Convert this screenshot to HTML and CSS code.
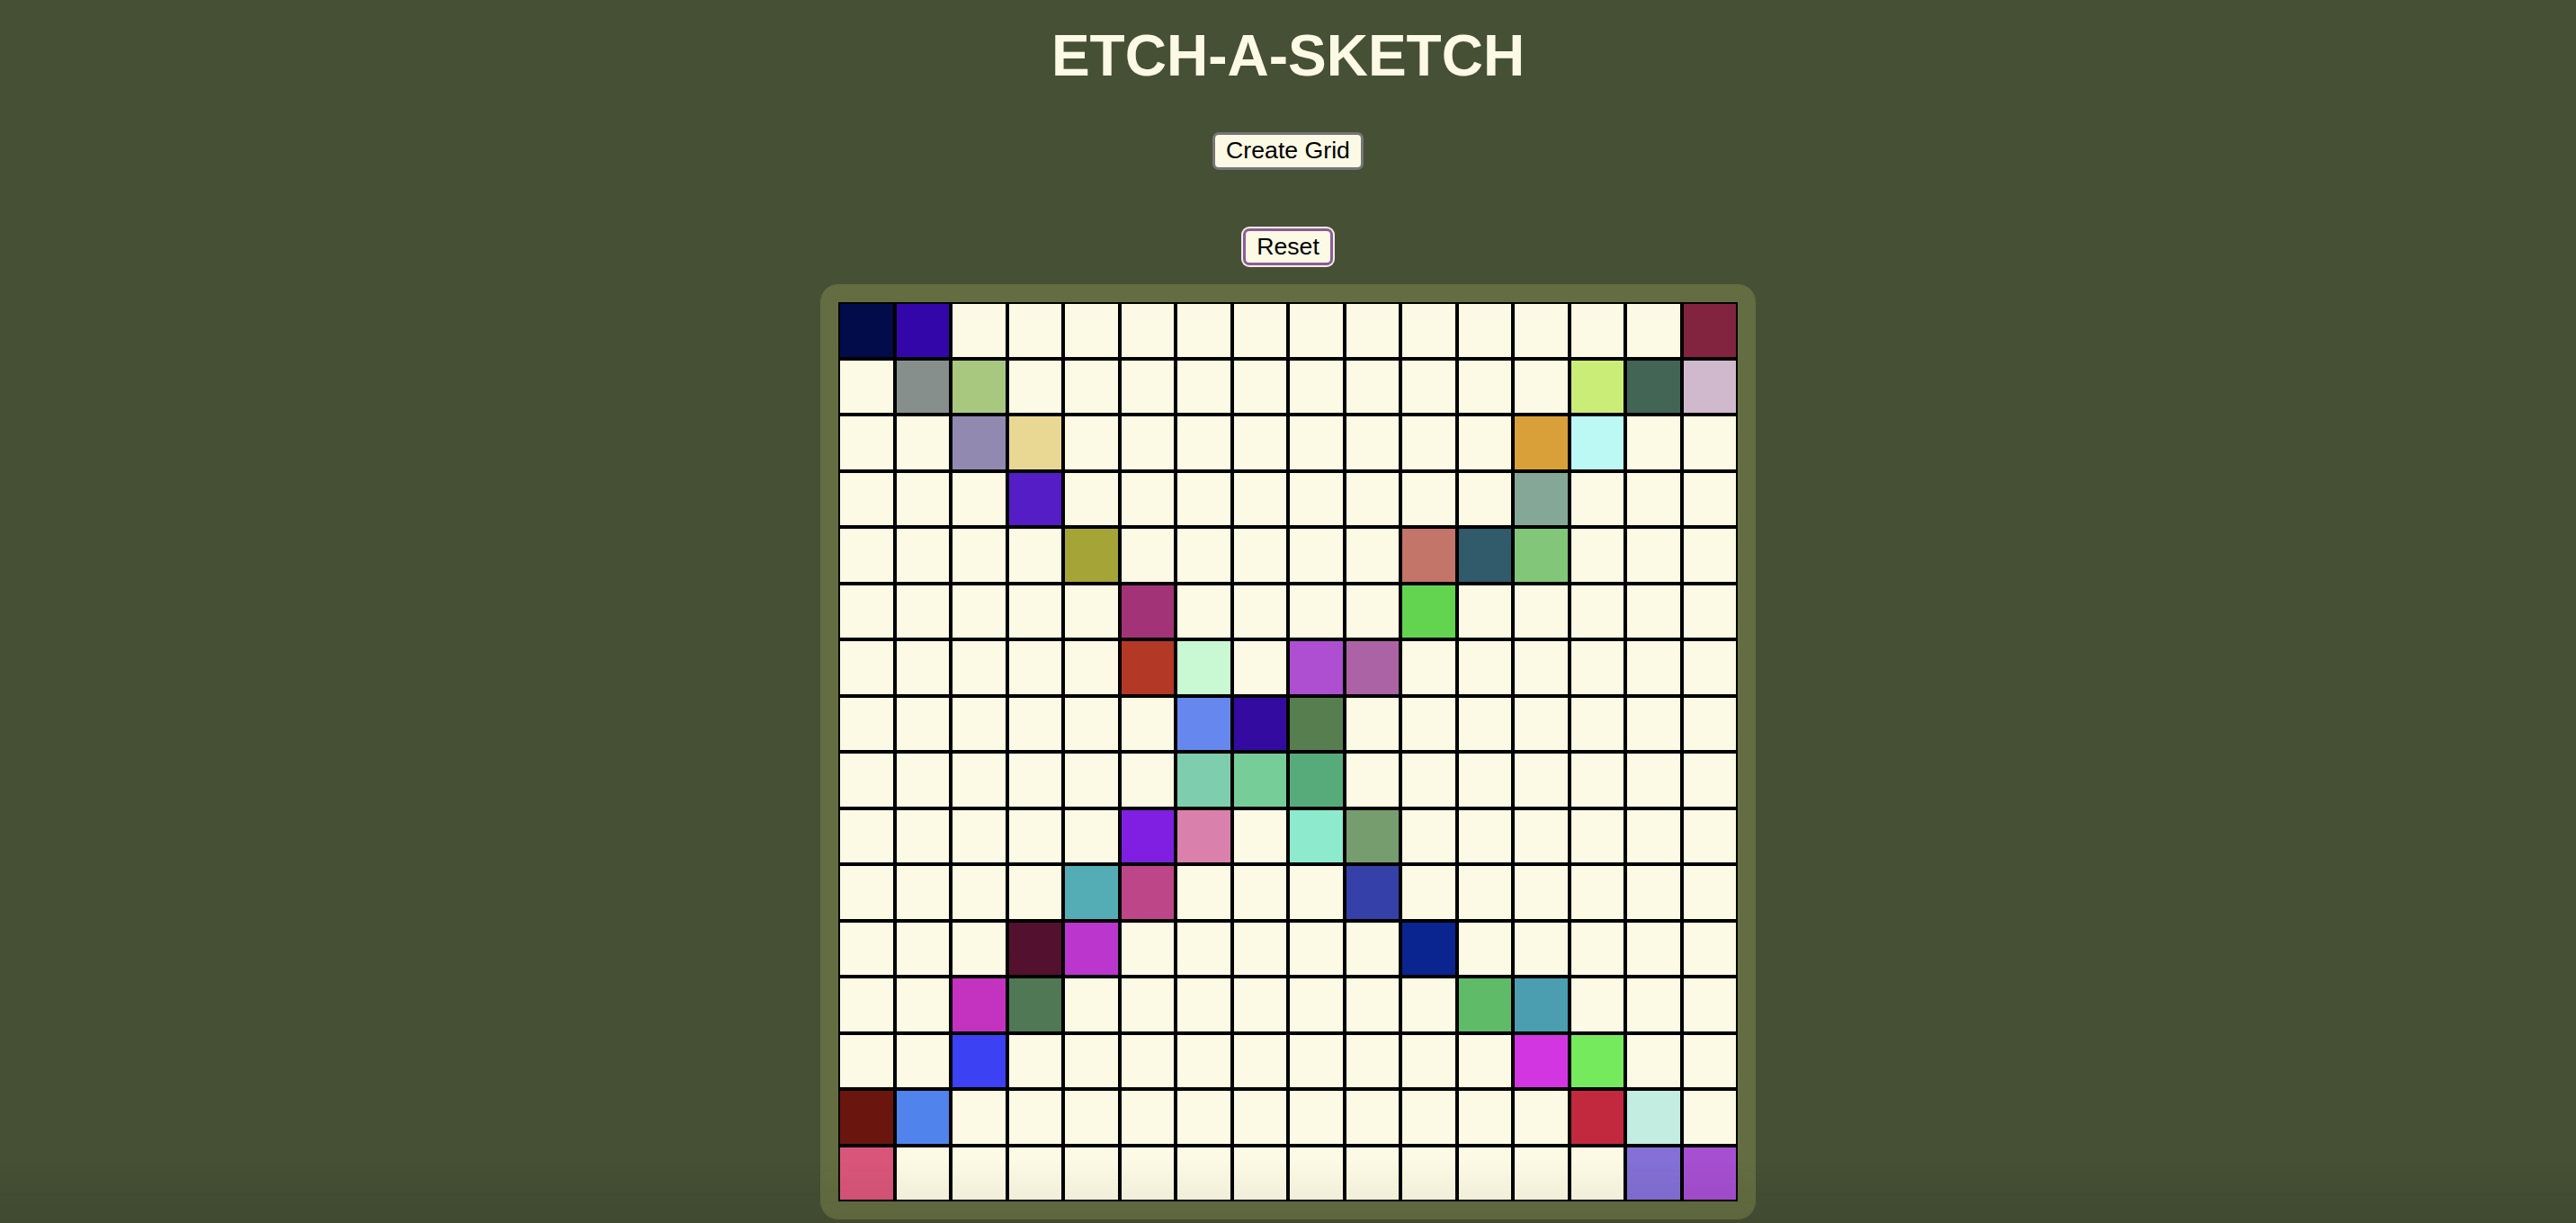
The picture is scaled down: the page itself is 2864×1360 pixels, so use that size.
FILE: index.html
```html
<!DOCTYPE html>
<html lang="en">
<head>
<meta charset="utf-8">
<title>Etch-a-Sketch</title>
<link rel="stylesheet" href="styles.css">
</head>
<body>
<main class="app">
  <h1 class="title">ETCH-A-SKETCH</h1>
  <div class="controls">
    <button class="btn btn-create" type="button">Create Grid</button>
    <button class="btn btn-reset" type="button">Reset</button>
  </div>
  <div class="board">
    <div class="grid" id="grid"></div>
  </div>
</main>
<div class="vignette"></div>
<script src="script.js"></script>
</body>
</html>
```

FILE: script.js
```js
(function () {
  var painted = {
    "0,0": "#020c4a", "0,1": "#3306a9", "0,15": "#82243f",
    "1,1": "#878f8c", "1,2": "#a8c880", "1,13": "#c9ed76", "1,14": "#426555", "1,15": "#d0b9cd",
    "2,2": "#9289b0", "2,3": "#e8d894", "2,12": "#d9a039", "2,13": "#bcf9f4",
    "3,3": "#541dc6", "3,12": "#85a798",
    "4,4": "#a4a437", "4,10": "#c27568", "4,11": "#315a6a", "4,12": "#81c679",
    "5,5": "#a23377", "5,10": "#63d450",
    "6,5": "#b43826", "6,6": "#c8f9d2", "6,8": "#ad4fd0", "6,9": "#ac63a6",
    "7,6": "#6688ee", "7,7": "#340ba0", "7,8": "#577e4f",
    "8,6": "#7ecdae", "8,7": "#76cd98", "8,8": "#57ab7b",
    "9,5": "#801fe2", "9,6": "#da80ad", "9,8": "#8deacd", "9,9": "#769d6e",
    "10,4": "#54adb5", "10,5": "#bd4688", "10,9": "#3540a8",
    "11,3": "#53112f", "11,4": "#ba36cd", "11,10": "#0a2490",
    "12,2": "#c433c0", "12,3": "#507854", "12,11": "#5fbb67", "12,12": "#4a9eb0",
    "13,2": "#3c41f4", "13,12": "#d136e0", "13,13": "#74ea5c",
    "14,0": "#6a160e", "14,1": "#5083ec", "14,13": "#c2283e", "14,14": "#c2ede0",
    "15,0": "#d9567a", "15,14": "#8470d6", "15,15": "#a64fd1"
  };
  var grid = document.getElementById("grid");
  for (var r = 0; r < 16; r++) {
    for (var c = 0; c < 16; c++) {
      var cell = document.createElement("div");
      cell.className = "cell";
      var key = r + "," + c;
      if (painted[key]) cell.style.backgroundColor = painted[key];
      grid.appendChild(cell);
    }
  }
})();
```

FILE: styles.css
```css
html, body {
  margin: 0;
  padding: 0;
}

body {
  background: #465035;
  min-height: 1360px;
  font-family: "Liberation Sans", Arial, Helvetica, sans-serif;
  overflow: hidden;
}

.app {
  display: flex;
  flex-direction: column;
  align-items: center;
  padding-top: 25px;
}

.title {
  margin: 0;
  font-size: 64px;
  line-height: 74px;
  font-weight: 700;
  color: #fcf9e4;
}

.controls {
  display: flex;
  flex-direction: column;
  align-items: center;
  gap: 65px;
  margin-top: 48px;
}

.btn {
  font-family: "Liberation Sans", Arial, Helvetica, sans-serif;
  font-size: 26.67px;
  line-height: 31.5px;
  color: #000;
  background: #fcf9e4;
  padding: 2px 12px;
  border: 3px solid #767676;
  border-radius: 7px;
  margin: 0;
}

.btn-reset {
  border-color: #8c5c97;
  box-shadow: 0 0 0 2px #f3eee4;
}

.board {
  margin-top: 21px;
  padding: 20px;
  background: #646d41;
  border-radius: 20px;
}

.grid {
  width: 1000px;
  height: 1000px;
  display: grid;
  grid-template-columns: repeat(16, 1fr);
  grid-template-rows: repeat(16, 1fr);
}

.cell {
  box-sizing: border-box;
  border: 2px solid #000;
  background: #fcf9e4;
}

.vignette {
  position: fixed;
  left: 0;
  right: 0;
  bottom: 0;
  height: 70px;
  pointer-events: none;
  background: linear-gradient(to bottom, rgba(0, 0, 0, 0), rgba(0, 0, 0, 0.07));
}
```
